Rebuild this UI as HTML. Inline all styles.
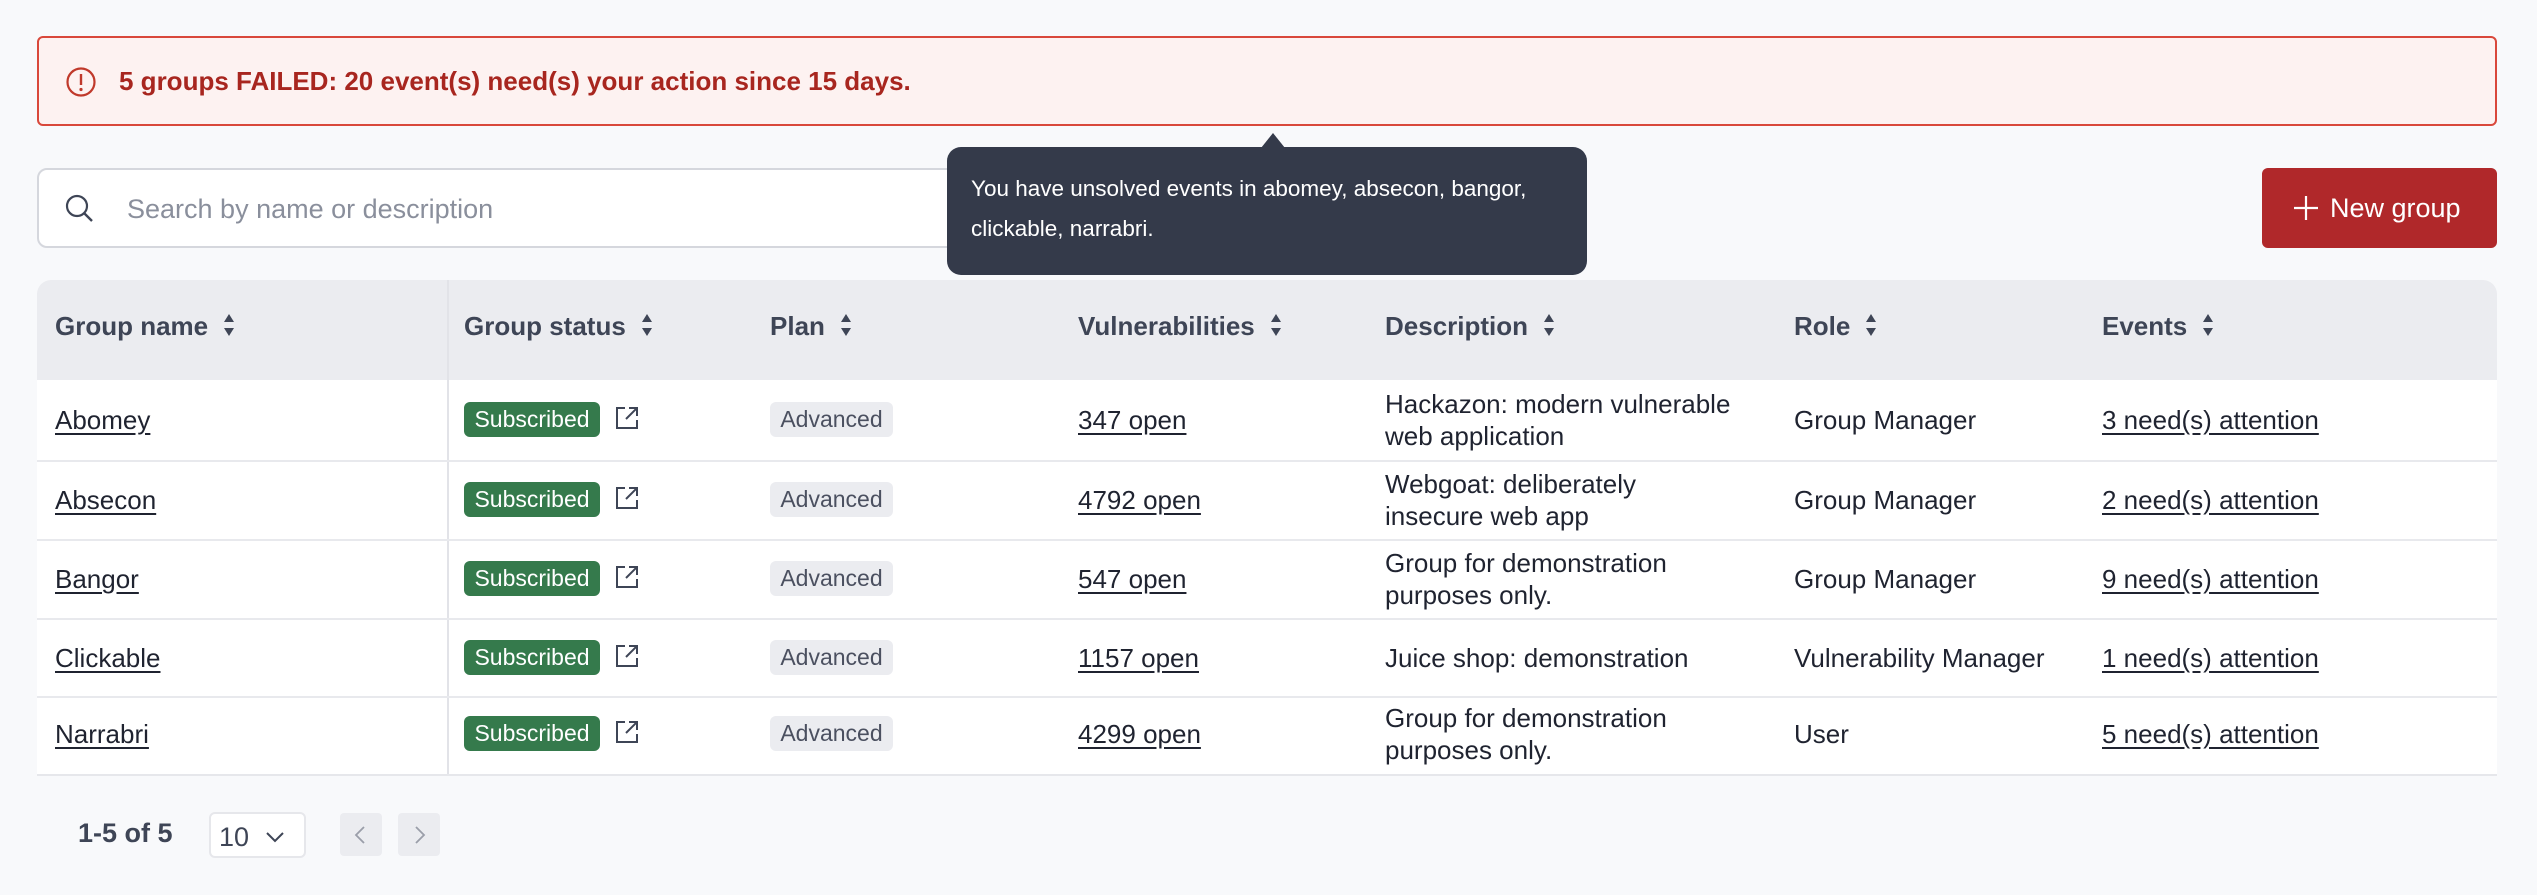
<!DOCTYPE html>
<html><head><meta charset="utf-8"><style>
*{box-sizing:border-box;margin:0;padding:0}
body{width:2537px;height:895px;background:#f8f9fb;font-family:"Liberation Sans",sans-serif;position:relative;overflow:hidden;color:#1f2330}
.abs{position:absolute}
.alert{left:37px;top:36px;width:2460px;height:90px;border:2px solid #d9483b;border-radius:6px;background:#fdf2f1}
.alert .t{position:absolute;left:80px;top:28px;font-size:26px;font-weight:bold;color:#a8261f}
.search{left:37px;top:168px;width:960px;height:80px;border:2px solid #d5d7dd;border-radius:10px;background:#fff}
.search span{position:absolute;left:88px;top:24px;font-size:27px;color:#8a8f9c}
.btn{left:2262px;top:168px;width:235px;height:80px;background:#b0282a;border-radius:6px;color:#fff;font-size:27px;line-height:80px;padding-left:68px}
.tip{left:947px;top:147px;width:640px;height:128px;background:#343a4a;border-radius:14px;color:#fff;font-size:22.5px;line-height:40px;padding:22px 24px}
.tip:before{content:"";position:absolute;left:314px;top:-14px;border-left:12px solid transparent;border-right:12px solid transparent;border-bottom:15px solid #343a4a}
.table{left:37px;top:280px;width:2460px;height:496px;background:#fff;border-radius:14px 14px 0 0;overflow:hidden;border-bottom:2px solid #e6e7eb}
.hdr{position:absolute;left:0;top:0;width:100%;height:100px;background:#ebecf0}
.h{position:absolute;top:31px;font-size:26px;font-weight:bold;color:#3e4556}
.h svg{margin-left:14px;vertical-align:-3px}
.row{position:absolute;left:0;width:100%;border-top:2px solid #e8e9ed}
.c{position:absolute;font-size:26px;color:#1f2330;line-height:32px}
.u{text-decoration:underline;text-underline-offset:4px}
.sub{position:absolute;left:427px;width:136px;height:35px;background:#357a4c;color:#fff;border-radius:6px;font-size:23px;line-height:35px;text-align:center}
.adv{position:absolute;left:733px;width:123px;height:35px;background:#ebecf0;color:#4b5060;border-radius:6px;font-size:23px;line-height:35px;text-align:center}
.ext{position:absolute;left:576px}
.vl{position:absolute;left:410px;top:0;width:2px;height:496px;background:#e2e3e8}
</style></head><body>
<div class="abs alert">
<svg class="abs" style="left:26px;top:28px" width="32" height="32" viewBox="0 0 32 32"><circle cx="16" cy="16" r="13.5" fill="none" stroke="#c0392b" stroke-width="2.2"/><line x1="16" y1="8" x2="16" y2="19" stroke="#c0392b" stroke-width="2.4"/><circle cx="16" cy="23.5" r="1.6" fill="#c0392b"/></svg>
<div class="t">5 groups FAILED: 20 event(s) need(s) your action since 15 days.</div>
</div>
<div class="abs search">
<svg class="abs" style="left:24px;top:22px" width="34" height="34" viewBox="0 0 34 34"><circle cx="14" cy="14" r="10" fill="none" stroke="#3e4556" stroke-width="2.2"/><line x1="21" y1="21" x2="29" y2="29" stroke="#3e4556" stroke-width="2.4"/></svg>
<span>Search by name or description</span></div>
<div class="abs btn"><svg class="abs" style="left:30px;top:26px" width="28" height="28" viewBox="0 0 28 28"><path d="M14 2V26M2 14H26" stroke="#fff" stroke-width="2.2"/></svg>New group</div>
<div class="abs table">
<div class="hdr"></div><div class="vl"></div>
<div class="h" style="left:18px">Group name<svg width="14" height="26" viewBox="0 0 14 26"><path d="M7 2L12 10H2Z M7 24L12 16H2Z" fill="#3e4556"/></svg></div>
<div class="h" style="left:427px">Group status<svg width="14" height="26" viewBox="0 0 14 26"><path d="M7 2L12 10H2Z M7 24L12 16H2Z" fill="#3e4556"/></svg></div>
<div class="h" style="left:733px">Plan<svg width="14" height="26" viewBox="0 0 14 26"><path d="M7 2L12 10H2Z M7 24L12 16H2Z" fill="#3e4556"/></svg></div>
<div class="h" style="left:1041px">Vulnerabilities<svg width="14" height="26" viewBox="0 0 14 26"><path d="M7 2L12 10H2Z M7 24L12 16H2Z" fill="#3e4556"/></svg></div>
<div class="h" style="left:1348px">Description<svg width="14" height="26" viewBox="0 0 14 26"><path d="M7 2L12 10H2Z M7 24L12 16H2Z" fill="#3e4556"/></svg></div>
<div class="h" style="left:1757px">Role<svg width="14" height="26" viewBox="0 0 14 26"><path d="M7 2L12 10H2Z M7 24L12 16H2Z" fill="#3e4556"/></svg></div>
<div class="h" style="left:2065px">Events<svg width="14" height="26" viewBox="0 0 14 26"><path d="M7 2L12 10H2Z M7 24L12 16H2Z" fill="#3e4556"/></svg></div>

<div class="row" style="top:100px;height:80px;border-top:none">
<div class="c u" style="left:18px;top:24px">Abomey</div>
<div class="sub" style="top:22px">Subscribed</div>
<svg class="ext" style="top:24px" width="28" height="28" viewBox="0 0 28 28"><path d="M12 4H4V24H24V16M16 4H24V12M24 4L13 15" fill="none" stroke="#3e4556" stroke-width="2"/></svg>
<div class="adv" style="top:22px">Advanced</div>
<div class="c u" style="left:1041px;top:24px">347 open</div>
<div class="c" style="left:1348px;top:8px">Hackazon: modern vulnerable<br>web application</div>
<div class="c" style="left:1757px;top:24px">Group Manager</div>
<div class="c u" style="left:2065px;top:24px">3 need(s) attention</div></div>

<div class="row" style="top:180px;height:80px">
<div class="c u" style="left:18px;top:22px">Absecon</div>
<div class="sub" style="top:20px">Subscribed</div>
<svg class="ext" style="top:22px" width="28" height="28" viewBox="0 0 28 28"><path d="M12 4H4V24H24V16M16 4H24V12M24 4L13 15" fill="none" stroke="#3e4556" stroke-width="2"/></svg>
<div class="adv" style="top:20px">Advanced</div>
<div class="c u" style="left:1041px;top:22px">4792 open</div>
<div class="c" style="left:1348px;top:6px">Webgoat: deliberately<br>insecure web app</div>
<div class="c" style="left:1757px;top:22px">Group Manager</div>
<div class="c u" style="left:2065px;top:22px">2 need(s) attention</div></div>

<div class="row" style="top:259px;height:80px">
<div class="c u" style="left:18px;top:22px">Bangor</div>
<div class="sub" style="top:20px">Subscribed</div>
<svg class="ext" style="top:22px" width="28" height="28" viewBox="0 0 28 28"><path d="M12 4H4V24H24V16M16 4H24V12M24 4L13 15" fill="none" stroke="#3e4556" stroke-width="2"/></svg>
<div class="adv" style="top:20px">Advanced</div>
<div class="c u" style="left:1041px;top:22px">547 open</div>
<div class="c" style="left:1348px;top:6px">Group for demonstration<br>purposes only.</div>
<div class="c" style="left:1757px;top:22px">Group Manager</div>
<div class="c u" style="left:2065px;top:22px">9 need(s) attention</div></div>

<div class="row" style="top:338px;height:79px">
<div class="c u" style="left:18px;top:22px">Clickable</div>
<div class="sub" style="top:20px">Subscribed</div>
<svg class="ext" style="top:22px" width="28" height="28" viewBox="0 0 28 28"><path d="M12 4H4V24H24V16M16 4H24V12M24 4L13 15" fill="none" stroke="#3e4556" stroke-width="2"/></svg>
<div class="adv" style="top:20px">Advanced</div>
<div class="c u" style="left:1041px;top:22px">1157 open</div>
<div class="c" style="left:1348px;top:22px">Juice shop: demonstration</div>
<div class="c" style="left:1757px;top:22px">Vulnerability Manager</div>
<div class="c u" style="left:2065px;top:22px">1 need(s) attention</div></div>

<div class="row" style="top:416px;height:80px">
<div class="c u" style="left:18px;top:20px">Narrabri</div>
<div class="sub" style="top:18px">Subscribed</div>
<svg class="ext" style="top:20px" width="28" height="28" viewBox="0 0 28 28"><path d="M12 4H4V24H24V16M16 4H24V12M24 4L13 15" fill="none" stroke="#3e4556" stroke-width="2"/></svg>
<div class="adv" style="top:18px">Advanced</div>
<div class="c u" style="left:1041px;top:20px">4299 open</div>
<div class="c" style="left:1348px;top:4px">Group for demonstration<br>purposes only.</div>
<div class="c" style="left:1757px;top:20px">User</div>
<div class="c u" style="left:2065px;top:20px">5 need(s) attention</div></div>
</div>
<div class="abs tip">You have unsolved events in abomey, absecon, bangor,<br>clickable, narrabri.</div>
<div class="abs" style="left:78px;top:818px;font-size:27px;font-weight:bold;color:#3e4556">1-5 of 5</div>
<div class="abs" style="left:209px;top:812px;width:97px;height:46px;background:#fff;border:2px solid #e6e7eb;border-radius:6px;font-size:27px;color:#3e4556;padding:8px 0 0 8px">10<svg class="abs" style="left:54px;top:16px" width="20" height="14" viewBox="0 0 20 14"><path d="M2 3L10 11L18 3" fill="none" stroke="#3e4556" stroke-width="2"/></svg></div>
<div class="abs" style="left:340px;top:813px;width:42px;height:43px;background:#ebecf0;border-radius:4px"><svg class="abs" style="left:13px;top:12px" width="14" height="20" viewBox="0 0 14 20"><path d="M11 2L3 10L11 18" fill="none" stroke="#9a9ea9" stroke-width="1.8"/></svg></div>
<div class="abs" style="left:398px;top:813px;width:42px;height:43px;background:#ebecf0;border-radius:4px"><svg class="abs" style="left:15px;top:12px" width="14" height="20" viewBox="0 0 14 20"><path d="M3 2L11 10L3 18" fill="none" stroke="#9a9ea9" stroke-width="1.8"/></svg></div>
</body></html>
